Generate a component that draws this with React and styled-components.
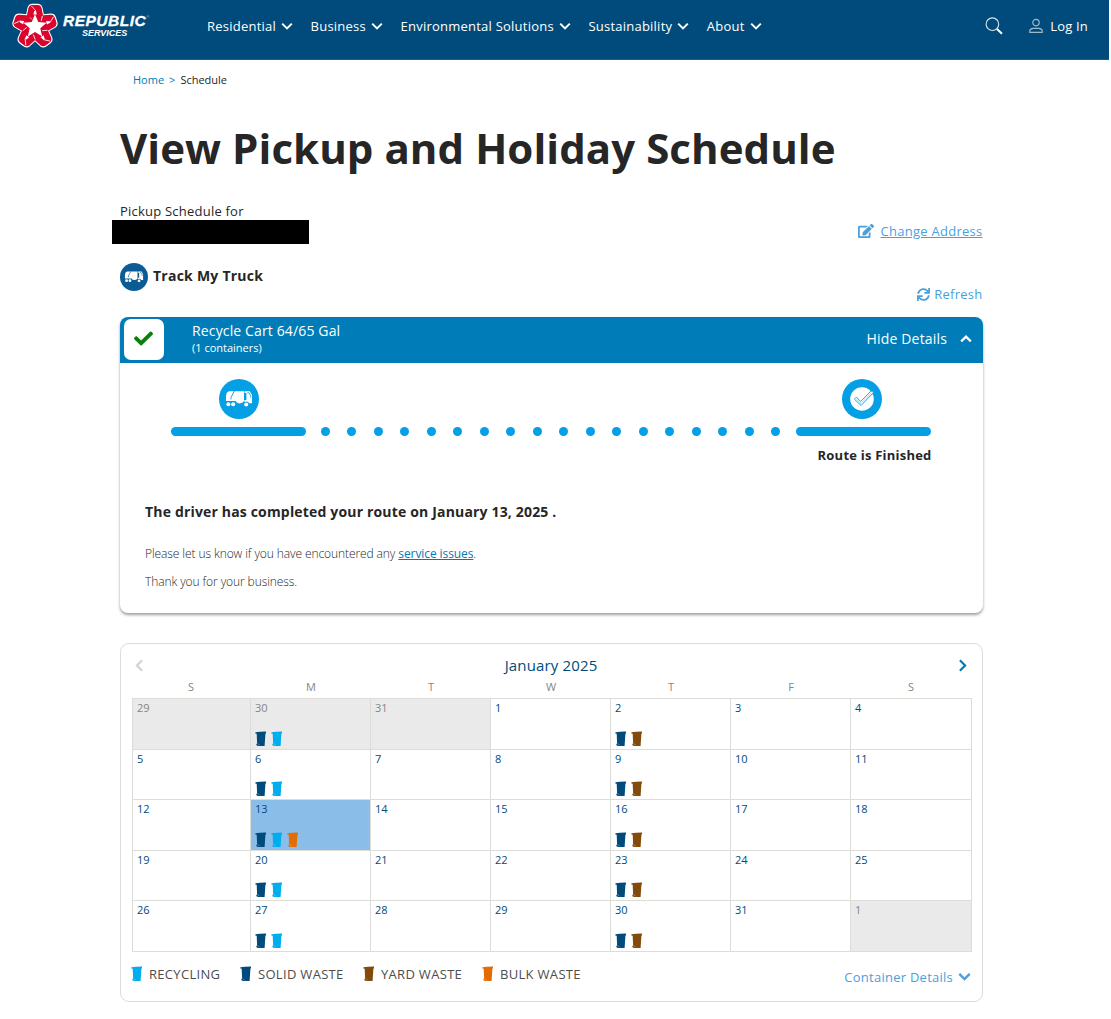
import React from "react";
import styled, { createGlobalStyle } from "styled-components";
import { FaEdit, FaSync, FaCheck } from "react-icons/fa";

const NAV = ["Residential", "Business", "Environmental Solutions", "Sustainability", "About"];

const WEEKDAYS = ["S", "M", "T", "W", "T", "F", "S"];

const BINS = {
  recycling: "#00aeef",
  solid: "#004b7c",
  yard: "#824b0c",
  bulk: "#e36c05",
};

const LEGEND = [
  { bin: "recycling", label: "RECYCLING", width: 109 },
  { bin: "solid", label: "SOLID WASTE", width: 123 },
  { bin: "yard", label: "YARD WASTE", width: 119 },
  { bin: "bulk", label: "BULK WASTE", width: 100 },
];

// The grid starts on Sunday, December 29
const DAYS = Array.from({ length: 35 }, (_, i) => {
  const outside = i < 3 || i > 33;
  const date = i < 3 ? 29 + i : i > 33 ? i - 33 : i - 2;
  const selected = i === 15;
  let bins = [];
  if (i % 7 === 1) bins = ["solid", "recycling"];
  if (i % 7 === 4) bins = ["solid", "yard"];
  if (selected) bins = ["solid", "recycling", "bulk"];
  return { date, outside, selected, bins };
});

const Chevron = ({ turn = 0, size = 12, weight = 2, color = "currentColor" }) => (
  <svg width={size} height={size} viewBox="0 0 12 12" fill="none">
    <path
      d="M1.2 3.6 6 8.4l4.8-4.8"
      stroke={color}
      strokeWidth={weight}
      transform={`rotate(${turn} 6 6)`}
    />
  </svg>
);

const ARMS = [0, 72, 144, 216, 288];

const StarLogo = () => (
  <svg width="46" height="46" viewBox="-23 -23.5 46 46">
    {ARMS.map((a) => (
      <path
        key={a}
        transform={`rotate(${a})`}
        d="M-8.6-9.6-6.8-18.6Q-5.8-22-2.6-22H2.6Q5.8-22 6.8-18.6L8.6-9.6 0 0Z"
        fill="#d9052c"
        stroke="#fff"
        strokeWidth="1.5"
        strokeLinejoin="round"
      />
    ))}
    {ARMS.map((a) => (
      <g key={a} transform={`rotate(${a})`}>
        <path d="M-8.4-9.4-6.5-18.4Q-5.5-21.5-2.6-21.5H2.6Q5.5-21.5 6.5-18.4L8.4-9.4 0 0Z" fill="#d9052c" />
        <path d="M-1.6-12-.8-15.6H1L1.8-12Z" fill="#fff" />
        <path d="M1-15.4-3.6-20.6M-7.9-10.4-3.4-7.6" stroke="#fff" strokeWidth="0.8" />
      </g>
    ))}
    <path
      d="M0-12.2 3.3-4.5 11.6-3.8 5.3 1.7 7.2 9.9 0 5.6-7.2 9.9-5.3 1.7-11.6-3.8-3.3-4.5Z"
      fill="#fff"
    />
  </svg>
);

const TruckIcon = ({ size, color, bg }) => (
  <svg width={size} height={size} viewBox="0 0 40 40">
    <circle cx="20" cy="20" r="20" fill={bg} />
    <g fill={color}>
      <path d="M10.3 12.3H25V22Q23.8 24.4 20.5 24.4 17.5 24.4 16.6 22H7V17.2Q7.2 13 10.3 12.3Z" />
      <path d="M25.6 12.3H30.8L33 16V24.2H30.2Q28.8 21.4 25.4 23V21H27.4V14H25.6Z" />
      <circle cx="9.4" cy="25.2" r="2" />
      <circle cx="14.2" cy="25.2" r="2" />
      <circle cx="27.2" cy="25.4" r="2" />
    </g>
    <path d="M15.4 12 12 18.4V20.4" fill="none" stroke={bg} strokeWidth="0.9" />
    <path d="M28.2 13.8H30L31.6 16.4V18.6" fill="none" stroke={bg} strokeWidth="0.8" />
  </svg>
);

const FinishedIcon = () => (
  <svg width="40" height="40" viewBox="0 0 40 40">
    <circle cx="20" cy="20" r="20" fill="#049fe5" />
    <circle cx="20" cy="20" r="11.8" fill="#fff" />
    <path
      d="M12.4 20.2 14.4 18.2 18.7 22.4 28.8 12.2H31.3V13.8L19.1 26.5Z"
      fill="#fff"
      stroke="#049fe5"
      strokeWidth="0.9"
    />
    <path d="M14.3 20 19 24.5 29.5 13.6" fill="none" stroke="#049fe5" strokeWidth="0.4" />
  </svg>
);

const Bin = ({ type }) => (
  <svg width="12" height="16" viewBox="0 0 12 16">
    <path
      d="M.4 1.2 5 .7 11 .4V2.2L10.4 2.8 9.6 15H3L1.4 14.3V13L2.1 12.2 1.7 2.8.4 2.5Z"
      fill={BINS[type]}
    />
    <path d="M2.4 12.4 3.6 13.2 4.8 14.4" fill="none" stroke="#fff" strokeWidth="0.5" opacity="0.6" />
  </svg>
);

function Header() {
  return (
    <TopBar>
      <Brand>
        <StarLogo />
        <BrandText>
          <BrandName>REPUBLIC</BrandName>
          <BrandSub>SERVICES</BrandSub>
        </BrandText>
      </Brand>
      <Nav>
        {NAV.map((item) => (
          <NavItem key={item} href="#">
            {item}
            <Chevron />
          </NavItem>
        ))}
      </Nav>
      <SearchButton aria-label="Search">
        <svg width="18" height="18" viewBox="0 0 18 18" fill="none" stroke="#fff">
          <circle cx="7.4" cy="7.2" r="6.3" strokeWidth="1.1" opacity="0.85" />
          <path d="m12 12 5 4.8" strokeWidth="2" />
        </svg>
      </SearchButton>
      <Login href="#">
        <svg width="14" height="16" viewBox="0 0 14 16" fill="none" stroke="#9dbacd">
          <circle cx="7" cy="4.6" r="3.2" strokeWidth="1.2" />
          <path d="M.8 14.4V12.8Q1 10.8 4 10.4H10Q13 10.8 13.2 12.8V14.4Z" strokeWidth="1.2" />
        </svg>
        Log In
      </Login>
    </TopBar>
  );
}

function Tracker() {
  return (
    <TrackerCard>
      <TrackerHead>
        <StatusBox>
          <FaCheck size={19} />
        </StatusBox>
        <CartInfo>
          <CartName>Recycle Cart 64/65 Gal</CartName>
          <CartCount>(1 containers)</CartCount>
        </CartInfo>
        <HideDetails>
          Hide Details
          <Chevron turn={180} weight={2.2} />
        </HideDetails>
      </TrackerHead>
      <Route>
        <Stops>
          <TruckIcon size={40} color="#fff" bg="#049fe5" />
          <FinishedIcon />
        </Stops>
        <Line>
          <Segment />
          <Dots>
            {Array.from({ length: 18 }, (_, i) => (
              <Dot key={i} />
            ))}
          </Dots>
          <Segment />
        </Line>
        <RouteStatus>Route is Finished</RouteStatus>
      </Route>
      <Message>
        <Completed>The driver has completed your route on January 13, 2025 .</Completed>
        <Note>
          Please let us know if you have encountered any <a href="#">service issues</a>.
        </Note>
        <Note>Thank you for your business.</Note>
      </Message>
    </TrackerCard>
  );
}

function Calendar() {
  return (
    <CalendarCard>
      <MonthRow>
        <Chevron turn={90} weight={2} size={13} color="#d2d2d2" />
        <Month>January 2025</Month>
        <Chevron turn={-90} weight={2} size={13} color="#0079b8" />
      </MonthRow>
      <Weekdays>
        {WEEKDAYS.map((day, i) => (
          <span key={i}>{day}</span>
        ))}
      </Weekdays>
      <Grid>
        {DAYS.map((day, i) => (
          <Day key={i} $outside={day.outside} $selected={day.selected}>
            <DayNumber>{day.date}</DayNumber>
            <BinRow>
              {day.bins.map((bin) => (
                <Bin key={bin} type={bin} />
              ))}
            </BinRow>
          </Day>
        ))}
      </Grid>
      <Footer>
        {LEGEND.map(({ bin, label, width }) => (
          <LegendItem key={bin} $width={width}>
            <Bin type={bin} />
            {label}
          </LegendItem>
        ))}
        <ContainerDetails href="#">
          Container Details
          <Chevron weight={2.2} size={13} />
        </ContainerDetails>
      </Footer>
    </CalendarCard>
  );
}

export default function App() {
  return (
    <Page>
      <GlobalStyle />
      <Header />
      <Content>
        <Breadcrumb>
          <a href="#">Home</a>
          <i>&gt;</i>
          <span>Schedule</span>
        </Breadcrumb>
        <Title>View Pickup and Holiday Schedule</Title>
        <AddressRow>
          <Address>
            <AddressLabel>Pickup Schedule for</AddressLabel>
            <Redacted />
          </Address>
          <ChangeAddress>
            <FaEdit size={16} />
            <a href="#">Change Address</a>
          </ChangeAddress>
        </AddressRow>
        <TrackRow>
          <TrackTitle>
            <TruckIcon size={28} color="#fff" bg="#0b5c94" />
            <span>Track My Truck</span>
          </TrackTitle>
          <Refresh href="#">
            <FaSync size={13} />
            Refresh
          </Refresh>
        </TrackRow>
        <Tracker />
        <Calendar />
      </Content>
    </Page>
  );
}

const GlobalStyle = createGlobalStyle`
  * {
    box-sizing: border-box;
  }
  body {
    margin: 0;
    background: #fff;
    color: #262626;
    font-family: "Open Sans", sans-serif;
  }
  svg {
    display: block;
    flex-shrink: 0;
  }
`;

const Page = styled.div`
  height: 1019px;
  overflow: hidden;
`;

const TopBar = styled.header`
  display: flex;
  align-items: center;
  width: 1109px;
  height: 60px;
  padding-bottom: 7px;
  background-color: #004b7c;
  border-bottom: 1px solid #1a5d89;
  color: #fff;
`;

const Brand = styled.div`
  display: flex;
  align-items: center;
  width: 195px;
  margin-left: 12px;
`;

const BrandText = styled.div`
  display: flex;
  flex-direction: column;
  margin-left: 5px;
  font-family: "Liberation Sans", Arial, sans-serif;
  font-style: italic;
  font-weight: bold;
`;

const BrandName = styled.span`
  margin-top: -2px;
  font-size: 15.5px;
  line-height: 17px;
  letter-spacing: 0.5px;
  -webkit-text-stroke: 0.3px #fff;
  &::after {
    content: "®";
    font-size: 4px;
    font-weight: normal;
    vertical-align: 8px;
    line-height: 1;
    opacity: 0.6;
    -webkit-text-stroke: 0;
  }
`;

const BrandSub = styled.span`
  margin-left: 19px;
  font-size: 9px;
  line-height: 9px;
  letter-spacing: -0.05px;
`;

const Nav = styled.nav`
  display: flex;
  gap: 17.6px;
`;

const NavItem = styled.a`
  display: flex;
  align-items: center;
  gap: 5px;
  font-size: 13px;
  line-height: 20px;
  letter-spacing: 0.23px;
  color: #fff;
  text-decoration: none;
`;

const SearchButton = styled.button`
  display: flex;
  margin-left: auto;
  padding: 0;
  background: none;
  border: 0;
`;

const Login = styled.a`
  display: flex;
  align-items: center;
  gap: 7px;
  margin: 0 21px 0 26px;
  font-size: 13px;
  letter-spacing: 0.2px;
  color: #fff;
  text-decoration: none;
`;

const Content = styled.main`
  display: flex;
  flex-direction: column;
  width: 863px;
  margin-left: 120px;
`;

const Breadcrumb = styled.div`
  display: flex;
  gap: 5px;
  height: 20px;
  margin: 9px 0 0 13px;
  font-size: 11px;
  line-height: 21px;
  a {
    color: #0079b8;
    text-decoration: none;
  }
  i {
    color: #0079b8;
    font-style: normal;
  }
`;

const Title = styled.h1`
  height: 60px;
  margin: 29px 0 0;
  font-size: 42px;
  font-weight: 700;
  line-height: 60px;
  letter-spacing: 0.06px;
  white-space: nowrap;
`;

const AddressRow = styled.div`
  display: flex;
  justify-content: space-between;
  height: 65px;
  margin-top: 24px;
`;

const Address = styled.div`
  display: flex;
  flex-direction: column;
`;

const AddressLabel = styled.span`
  height: 18px;
  font-size: 13px;
  line-height: 18px;
  letter-spacing: 0.22px;
`;

const Redacted = styled.div`
  width: 197px;
  height: 24px;
  margin-left: -8px;
  background-color: #000;
`;

const ChangeAddress = styled.div`
  display: flex;
  align-items: center;
  gap: 6px;
  height: 20px;
  margin: 19px 0.5px 0 0;
  font-size: 13px;
  letter-spacing: 0.27px;
  color: #4a9fdc;
  a {
    color: inherit;
  }
`;

const TrackRow = styled.div`
  display: flex;
  justify-content: space-between;
  height: 50px;
`;

const TrackTitle = styled.div`
  display: flex;
  gap: 5px;
  height: 28px;
  margin-top: -4px;
  font-size: 14px;
  font-weight: 700;
  line-height: 25px;
  letter-spacing: 0.24px;
`;

const Refresh = styled.a`
  display: flex;
  align-items: center;
  gap: 4px;
  height: 20px;
  margin: 17px 0.5px 0 0;
  font-size: 13px;
  letter-spacing: 0.25px;
  color: #4a9fdc;
  text-decoration: none;
`;

const TrackerCard = styled.section`
  display: flex;
  flex-direction: column;
  height: 296px;
  border-radius: 8px;
  box-shadow: 0 2px 3px rgba(0, 0, 0, 0.38);
`;

const TrackerHead = styled.div`
  display: flex;
  height: 46px;
  padding: 2px 11px 3px 4px;
  background-color: #007db8;
  border-radius: 8px 8px 0 0;
  color: #fff;
`;

const StatusBox = styled.div`
  display: flex;
  align-items: center;
  justify-content: center;
  width: 40px;
  height: 41px;
  padding: 0 2px 3px 0;
  background-color: #fff;
  border-radius: 7px;
  color: #098109;
`;

const CartInfo = styled.div`
  display: flex;
  flex-direction: column;
  margin: 1px 0 0 28px;
`;

const CartName = styled.span`
  font-size: 14px;
  line-height: 22px;
  letter-spacing: 0.14px;
`;

const CartCount = styled.span`
  font-size: 11px;
  line-height: 12px;
`;

const HideDetails = styled.div`
  display: flex;
  align-items: center;
  gap: 13px;
  height: 37px;
  margin: 1px 0 0 auto;
  font-size: 14px;
  letter-spacing: 0.17px;
`;

const Route = styled.div`
  display: flex;
  flex-direction: column;
  width: 760px;
  margin: 16px 0 0 51px;
`;

const Stops = styled.div`
  display: flex;
  justify-content: space-between;
  padding: 0 49px 0 48px;
`;

const Line = styled.div`
  display: flex;
  align-items: center;
  height: 9px;
  margin-top: 8px;
`;

const Segment = styled.div`
  width: 135px;
  height: 9px;
  background-color: #049fe5;
  border-radius: 5px;
`;

const Dots = styled.div`
  display: flex;
  flex: 1;
  justify-content: space-between;
  padding: 0 16px 0 15px;
`;

const Dot = styled.div`
  width: 9px;
  height: 9px;
  background-color: #049fe5;
  border-radius: 50%;
`;

const RouteStatus = styled.span`
  margin: 9px -0.5px 0 0;
  font-size: 13px;
  font-weight: 700;
  line-height: 20px;
  letter-spacing: 0.22px;
  text-align: right;
`;

const Message = styled.div`
  display: flex;
  flex-direction: column;
  margin: 37px 0 0 25px;
`;

const Completed = styled.span`
  height: 30px;
  margin-bottom: 7px;
  font-size: 14px;
  font-weight: 700;
  line-height: 20px;
  letter-spacing: 0.17px;
`;

const Note = styled.span`
  height: 28px;
  font-size: 12px;
  font-weight: 300;
  line-height: 29px;
  letter-spacing: -0.09px;
  a {
    color: #0079b8;
    font-weight: 400;
  }
`;

const CalendarCard = styled.section`
  display: flex;
  flex-direction: column;
  height: 359px;
  margin-top: 30px;
  padding: 0 10px 0 11px;
  border: 1px solid #dcdcd9;
  border-radius: 9px;
`;

const MonthRow = styled.div`
  display: flex;
  align-items: center;
  justify-content: space-between;
  height: 24px;
  margin-top: 9px;
  padding: 0 3px 0 1px;
`;

const Month = styled.span`
  font-size: 15px;
  line-height: 23px;
  letter-spacing: 0.15px;
  color: #004b7c;
`;

const Weekdays = styled.div`
  display: grid;
  grid-template-columns: repeat(7, 120px);
  height: 21px;
  margin-left: -1px;
  font-size: 11px;
  line-height: 20px;
  text-align: center;
  color: #858585;
`;

const Grid = styled.div`
  display: grid;
  grid-template-columns: 118px repeat(5, 120px) 121px;
  grid-template-rows: repeat(5, 50.5px);
  width: 840px;
  margin-left: -0.5px;
  border-top: 1px solid #dcdcd9;
  border-left: 1px solid #dcdcd9;
`;

const Day = styled.div`
  display: flex;
  flex-direction: column;
  justify-content: space-between;
  padding: 1px 0 2px 4.5px;
  border-right: 1px solid #dcdcd9;
  border-bottom: 1px solid #dcdcd9;
  background-color: ${(props) => (props.$selected ? "#8bbde9" : props.$outside ? "#eaeaea" : "#fff")};
  color: ${(props) => (props.$outside ? "#858585" : "#004b7c")};
`;

const DayNumber = styled.span`
  font-size: 11px;
  line-height: 15px;
`;

const BinRow = styled.div`
  display: flex;
  gap: 4px;
`;

const Footer = styled.div`
  display: flex;
  height: 46px;
  margin: 1px 0 0 -1px;
  padding-right: 1px;
`;

const LegendItem = styled.div`
  display: flex;
  align-items: center;
  gap: 6px;
  width: ${(props) => props.$width}px;
  height: 43px;
  font-size: 13px;
  letter-spacing: 0.31px;
  color: #4d4d4d;
  white-space: nowrap;
`;

const ContainerDetails = styled.a`
  display: flex;
  align-items: center;
  gap: 5px;
  height: 48px;
  margin-left: auto;
  font-size: 13px;
  letter-spacing: 0.25px;
  color: #4a9fdc;
  text-decoration: none;
`;
